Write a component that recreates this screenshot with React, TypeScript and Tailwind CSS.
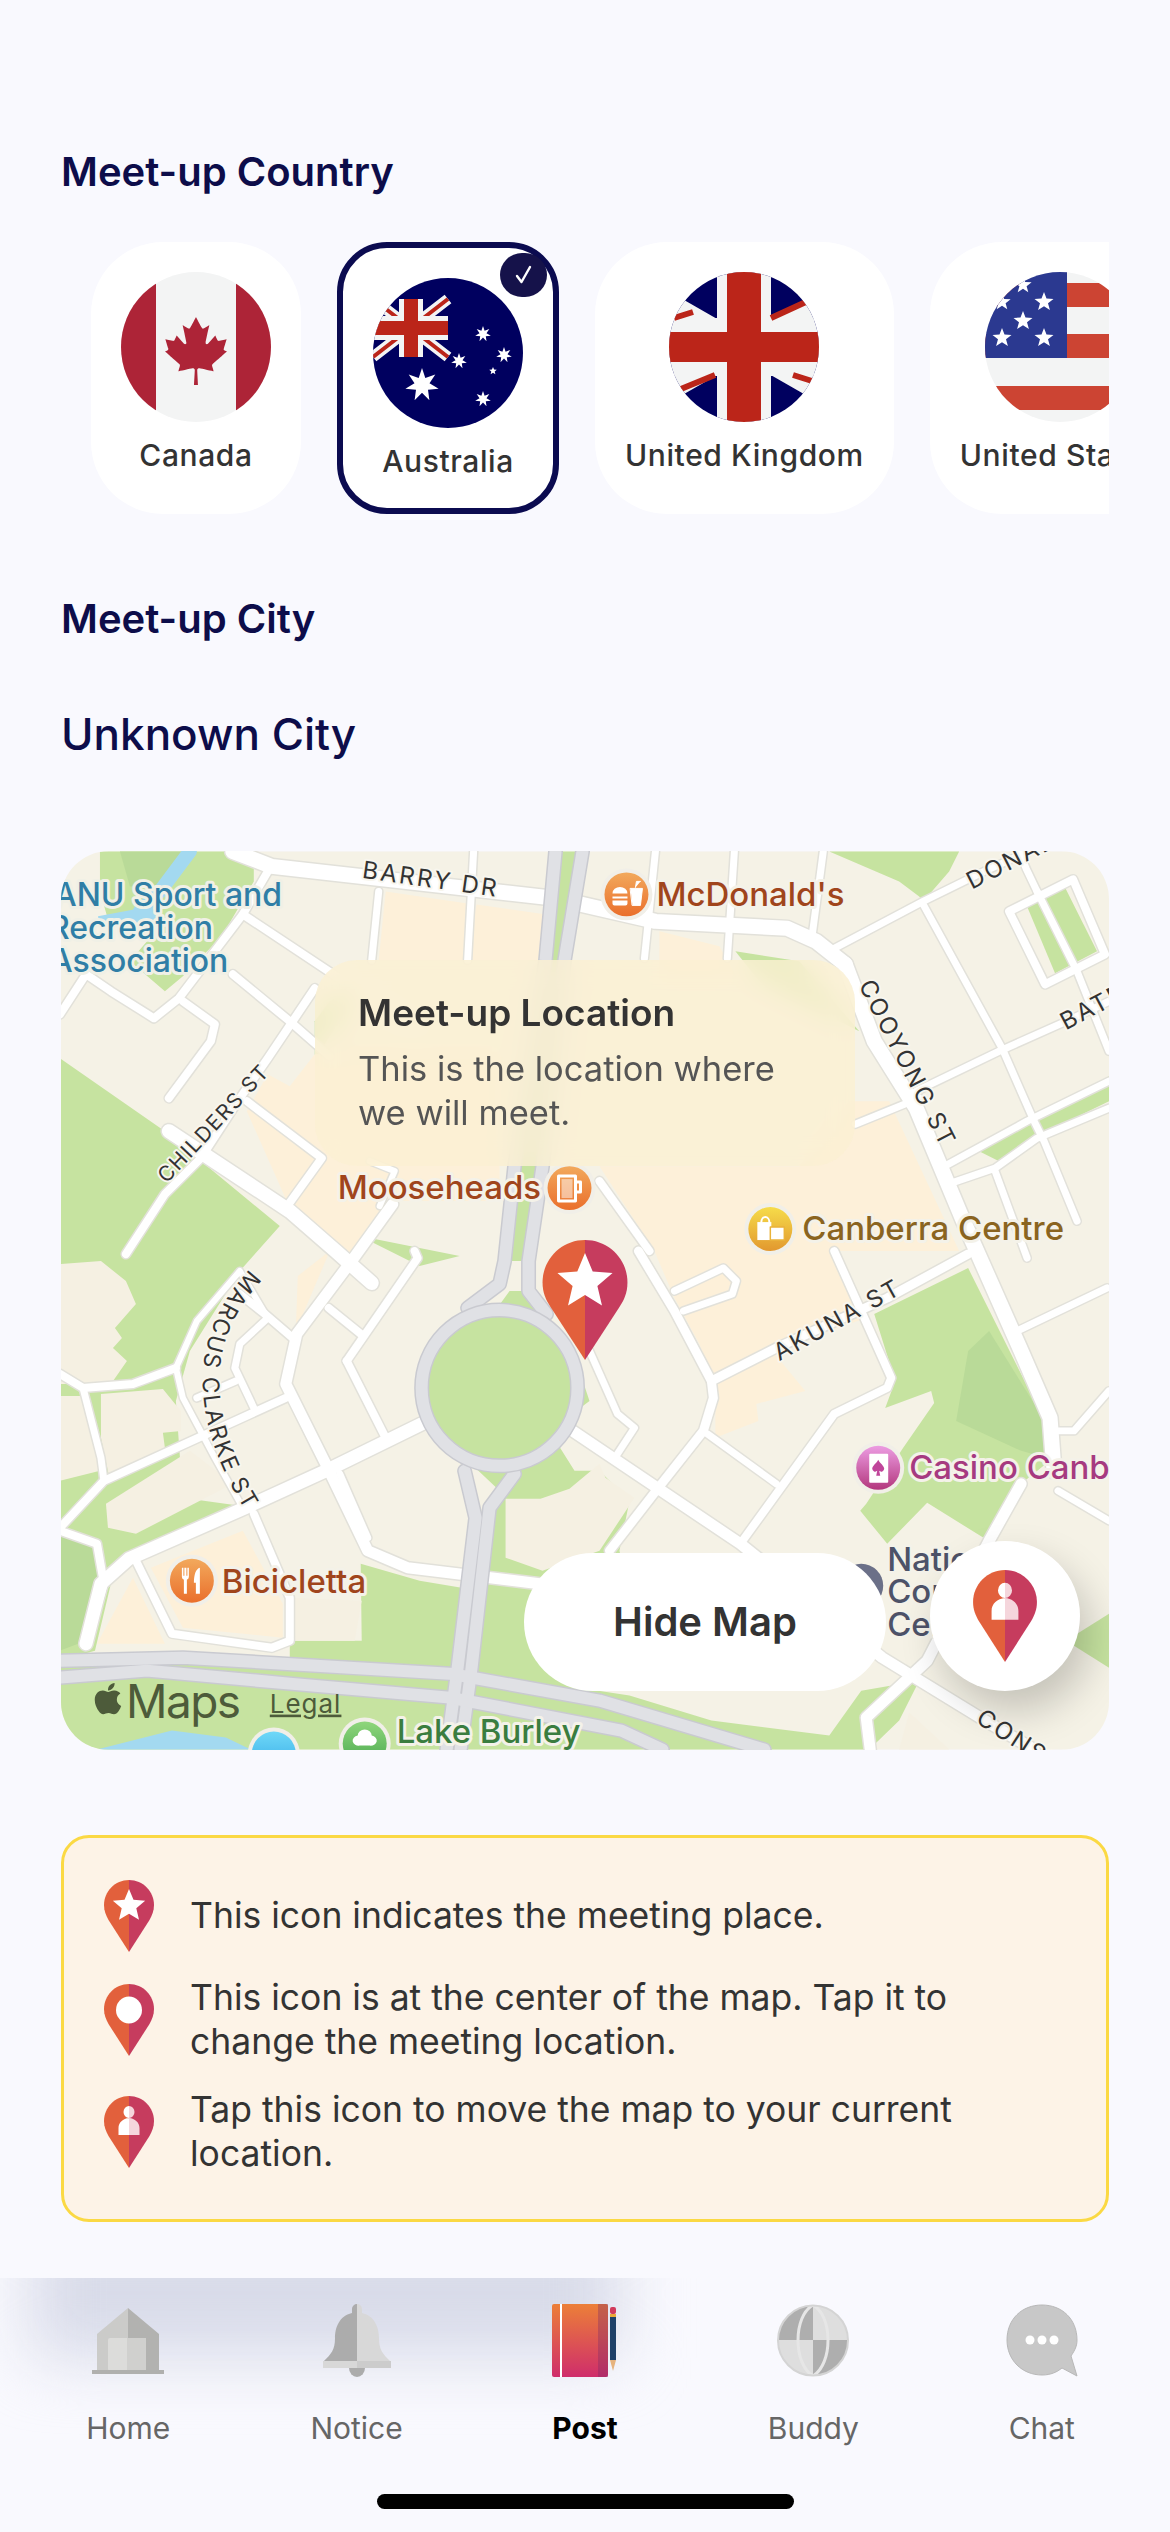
import { FaApple, FaCanadianMapleLeaf } from 'react-icons/fa';

const starPoints = (cx: number, cy: number, R: number, n = 5, ratio = 0.42) => {
  const pts: string[] = [];
  for (let i = 0; i < n * 2; i++) {
    const r = i % 2 === 0 ? R : R * ratio;
    const a = -Math.PI / 2 + (i * Math.PI) / n;
    pts.push(`${(cx + r * Math.cos(a)).toFixed(1)},${(cy + r * Math.sin(a)).toFixed(1)}`);
  }
  return pts.join(' ');
};

function Pin({ kind, className }: { kind: 'star' | 'dot' | 'person'; className: string }) {
  return (
    <svg viewBox="0 0 100 144" className={className}>
      <path d="M50 0C22 0 0 23 0 50C0 62 4 71 9 80L50 144Z" fill="#e2603c" />
      <path d="M50 0C78 0 100 23 100 50C100 62 96 71 91 80L50 144Z" fill="#c63c5e" />
      {kind === 'star' && <polygon points={starPoints(50, 52, 34, 5, 0.45)} fill="#fff" />}
      {kind === 'dot' && <ellipse cx="50" cy="52" rx="26" ry="27" fill="#fff" />}
      {kind === 'person' && (
        <>
          <path d="M50 20a11 12 0 0 0 0 24C38 45 29 53 29 64V78H50Z" fill="#fff" />
          <path d="M50 20a11 12 0 0 1 0 24C62 45 71 53 71 64V78H50Z" fill="#f5d6dc" />
        </>
      )}
    </svg>
  );
}

function FlagCanada() {
  return (
    <svg viewBox="0 0 150 150" className="w-[150px] h-[150px] block">
      <clipPath id="ca"><circle cx="75" cy="75" r="75" /></clipPath>
      <g clipPath="url(#ca)">
        <rect width="150" height="150" fill="#f3f4f4" />
        <rect width="35" height="150" fill="#ad2437" />
        <rect x="115" width="35" height="150" fill="#ad2437" />
        <FaCanadianMapleLeaf x="41" y="45" size={68} color="#ad2437" />
      </g>
    </svg>
  );
}

function FlagAustralia() {
  return (
    <svg viewBox="0 0 150 150" className="w-[150px] h-[150px] block">
      <clipPath id="au"><circle cx="75" cy="75" r="75" /></clipPath>
      <g clipPath="url(#au)">
        <rect width="150" height="150" fill="#00005f" />
        <path d="M0 21L75 79M75 21L0 79" stroke="#f3f4f4" strokeWidth="11" />
        <path d="M0 21L75 79M75 21L0 79" stroke="#bb2519" strokeWidth="4" />
        <rect x="26" y="21" width="24" height="58" fill="#f3f4f4" />
        <rect y="38" width="75" height="24" fill="#f3f4f4" />
        <rect x="31" y="21" width="14" height="58" fill="#bb2519" />
        <rect y="43" width="75" height="14" fill="#bb2519" />
        <polygon points={starPoints(49, 107, 17, 7, 0.45)} fill="#fff" />
        <polygon points={starPoints(110, 56, 8, 7, 0.45)} fill="#fff" />
        <polygon points={starPoints(131, 77, 8, 7, 0.45)} fill="#fff" />
        <polygon points={starPoints(86, 83, 8, 7, 0.45)} fill="#fff" />
        <polygon points={starPoints(120, 93, 4, 5, 0.45)} fill="#fff" />
        <polygon points={starPoints(110, 121, 8, 7, 0.45)} fill="#fff" />
      </g>
    </svg>
  );
}

function FlagUK() {
  return (
    <svg viewBox="0 0 150 150" className="w-[150px] h-[150px] block">
      <clipPath id="uk"><circle cx="75" cy="75" r="75" /></clipPath>
      <g clipPath="url(#uk)">
        <rect width="150" height="150" fill="#00005f" />
        <path d="M0 32L75 75M150 32L75 75M0 118L75 75M150 118L75 75" stroke="#f3f4f4" strokeWidth="22" />
        <rect x="48" width="54" height="150" fill="#f3f4f4" />
        <rect y="46" width="150" height="58" fill="#f3f4f4" />
        <path d="M102 46L139 29M7 119L46 103M5 46L24 40M124 103L143 109" stroke="#bb2519" strokeWidth="6" />
        <rect x="58" width="34" height="150" fill="#bb2519" />
        <rect y="60" width="150" height="30" fill="#bb2519" />
      </g>
    </svg>
  );
}

function FlagUS() {
  return (
    <svg viewBox="0 0 150 150" className="w-[150px] h-[150px] block">
      <clipPath id="us"><circle cx="75" cy="75" r="75" /></clipPath>
      <g clipPath="url(#us)">
        <rect width="150" height="150" fill="#f3f4f4" />
        <rect y="11" width="150" height="24" fill="#cc4433" />
        <rect y="62" width="150" height="24" fill="#cc4433" />
        <rect y="114" width="150" height="24" fill="#cc4433" />
        <rect width="82" height="86" fill="#2b3990" />
        <polygon points={starPoints(38, 13, 9)} fill="#fff" />
        <polygon points={starPoints(59, 30, 10)} fill="#fff" />
        <polygon points={starPoints(17, 30, 9)} fill="#fff" />
        <polygon points={starPoints(38, 49, 10)} fill="#fff" />
        <polygon points={starPoints(17, 66, 10)} fill="#fff" />
        <polygon points={starPoints(59, 66, 10)} fill="#fff" />
      </g>
    </svg>
  );
}

const countries = [
  { name: 'Canada', Flag: FlagCanada },
  { name: 'Australia', Flag: FlagAustralia, selected: true },
  { name: 'United Kingdom', Flag: FlagUK },
  { name: 'United States', Flag: FlagUS },
];

function CountryCard({ name, Flag, selected }: { name: string; Flag: () => React.ReactNode; selected?: boolean }) {
  return (
    <div
      className={
        selected
          ? 'relative flex-none h-[272px] px-[30px] pt-[30px] bg-white rounded-[50px] border-[6px] border-[#0b0b50] flex flex-col items-center'
          : 'relative flex-none h-[272px] px-[30px] pt-[30px] bg-white rounded-[72px] flex flex-col items-center'
      }
    >
      {selected && (
        <div className="absolute top-[5px] right-[6px] w-[47px] h-[44px] rounded-full bg-[#15124a] flex items-center justify-center">
          <svg viewBox="0 0 24 24" className="w-[24px] h-[24px]" fill="none" stroke="#fff" strokeWidth="2.4" strokeLinecap="round" strokeLinejoin="round">
            <path d="M5 13l4.5 6L18 4" />
          </svg>
        </div>
      )}
      <Flag />
      <div className="mt-[14px] text-[30px] leading-[38px] font-medium tracking-[0.6px] text-[#333] whitespace-nowrap">{name}</div>
    </div>
  );
}

// map data, page coordinates (viewBox matches the card's place on screen)
const greens = [
  '100,850 254,850 254,880 222,935 183,975 165,990 130,960 160,925 110,925 100,890',
  '60,1057 165,1130 280,1225 240,1270 190,1350 176,1400 181,1470 120,1545 95,1650 60,1660',
  '60,1480 240,1505 129,1555 100,1585 60,1590',
  '361,1563 362,1640 290,1640 290,1665 600,1690 640,1640 620,1550 630,1500 600,1470 575,1470 550,1430 590,1400 585,1385 530,1290 510,1290 430,1400 426,1420 500,1490 480,1590 420,1580',
  '60,1660 300,1665 500,1675 630,1695 712,1720 830,1735 862,1690 920,1680 900,1720 870,1749 60,1749',
  '969,1267 875,1313 896,1380 886,1407 932,1390 935,1402 904,1447 867,1503 861,1510 888,1543 928,1502 986,1538 1022,1483 1047,1463 1044,1417',
  '830,850 960,850 950,870 924,900 920,895 900,880',
  '1020,1125 1110,1075 1110,1100 1038,1135 1000,1160 980,1150',
  '1067,1640 1110,1613 1110,1667',
  '315,1020 330,1000 360,985 315,1060',
  '736,950 800,960 860,1030 840,1020 760,980',
  '360,1235 460,1255 420,1265',
];
const darkGreens = [
  '969,1350 990,1330 1044,1417 1047,1457 1022,1450 957,1420',
  '60,1530 97,1545 104,1583 86,1640 60,1650',
  '120,850 190,850 170,885 130,885',
];
const lands = [
  '60,1263 101,1260 126,1280 136,1303 115,1327 122,1337 113,1347 127,1360 111,1383 60,1383',
  '101,1393 163,1388 181,1410 181,1430 163,1432 165,1447 126,1467 110,1480 101,1437',
  '233,1483 136,1533 108,1527 106,1503 190,1450',
  '506,1498 541,1498 570,1488 600,1463 606,1477 635,1497 600,1550 543,1570 506,1557',
  '290,1597 362,1600 355,1640 295,1640',
  '60,1395 83,1395 100,1470 60,1480',
  '900,1749 950,1749 910,1712',
];
const peach = [
  '386,890 468,902 465,959 379,959',
  '477,903 545,913 540,959 465,959',
  '268,1073 290,1085 315,1053 500,1053 500,1200 395,1200 355,1255 336,1260 290,1207 247,1110',
  '655,1250 835,1250 867,1317 782,1347 712,1373 700,1343 675,1297',
  '716,1383 773,1350 806,1390 757,1403 759,1420 716,1437',
  '600,1165 800,1165 850,1100 890,1100 960,1250 655,1250',
  '660,930 720,945 740,980 660,980',
  '151,1567 243,1530 283,1603 283,1637 183,1627',
  '97,1643 133,1577 165,1643',
  '298,1275 330,1250 296,1330',
];
const roads: [string, number][] = [
  ['233,850 272,865 556,897 656,920 788,927 817,940 846,963', 15],
  ['846,963 875,1040 917,1107 963,1217 1022,1350 1051,1417 1055,1470', 15],
  ['268,870 243,913 179,997 154,1017 111,990 86,973 60,1013', 8],
  ['243,913 326,968 420,1030', 8],
  ['233,973 290,1020 330,1055', 8],
  ['183,1000 215,1023 211,1040 169,1097', 8],
  ['315,987 268,1057 240,1097 201,1157 165,1193 126,1253', 8],
  ['169,1130 290,1210 336,1250 372,1282', 14],
  ['247,1100 322,1157 286,1207', 8],
  ['393,1203 354,1257 297,1333 286,1383 326,1463 368,1550 408,1567 540,1583', 11],
  ['379,890 372,959', 7],
  ['474,850 468,959', 7],
  ['656,850 645,957', 7],
  ['735,850 728,957', 7],
  ['824,850 813,933', 7],
  ['380,1205 395,1170 370,1160', 6],
  ['422,1423 326,1470 243,1508 129,1558 101,1583 86,1643', 13],
  ['60,1373 83,1387 133,1383 176,1367', 8],
  ['83,1387 101,1457 104,1480', 7],
  ['60,1527 104,1480 286,1397', 8],
  ['243,1507 215,1457 183,1397 176,1367 197,1320 240,1270 268,1317', 6],
  ['268,1317 240,1343 235,1367 254,1407', 7],
  ['197,1397 236,1380', 7],
  ['240,1293 265,1313 293,1337', 8],
  ['347,1360 418,1257 415,1250', 8],
  ['347,1360 386,1437', 8],
  ['329,1307 361,1333', 8],
  ['340,1473 368,1537', 7],
  ['60,1530 97,1543 104,1583 86,1643', 8],
  ['136,1560 172,1633 272,1647 290,1640 290,1597 254,1513', 8],
  ['835,947 924,900 985,870 1030,850', 7],
  ['924,903 1003,1047 1035,1120 1045,1140 1078,1220', 7],
  ['1010,910 1074,878 1106,953 1046,983 1010,910', 8],
  ['1038,890 1078,970 1110,1050', 7],
  ['1038,890 1027,867 1020,850', 7],
  ['917,1090 1000,1050 1074,1017 1110,1000', 7],
  ['856,1123 920,1097', 7],
  ['942,1167 1028,1120 1110,1080', 7],
  ['949,1183 996,1167 1038,1137 1110,1107', 7],
  ['996,1170 1028,1257', 7],
  ['969,1253 888,1297 777,1347 712,1380', 9],
  ['639,1250 675,1310 712,1380 714,1397 704,1430 659,1487 610,1550', 9],
  ['675,1290 724,1267 737,1280 733,1293 684,1310', 7],
  ['835,1250 892,1377 888,1387 835,1413 741,1543', 8],
  ['590,1350 618,1413 635,1427 618,1453', 7],
  ['573,1430 741,1543 883,1657 981,1717 1035,1749', 11],
  ['708,1433 777,1483', 7],
  ['1018,1330 1108,1287', 7],
  ['1051,1430 1075,1430 1110,1390', 7],
  ['1059,1490 1110,1520', 7],
  ['1022,1483 990,1540 928,1660 867,1717 871,1749', 11],
  ['600,1180 650,1250', 8],
];
const highways = [
  'M556 850L546 959L515 1165L505 1260L500 1283L468 1307',
  'M583 850L565 959L543 1165L529 1260L529 1290L547 1313',
  'M465 1470L476 1517L458 1667L447 1749',
  'M515 1473L490 1507L472 1667L461 1749',
  'M60 1660L183 1657L450 1673L600 1700L765 1749',
  'M60 1677L147 1670L290 1683L450 1697L622 1730L663 1749',
];

function RoadLabel({ x, y, rot, small, children }: { x: number; y: number; rot: number; small?: boolean; children: string }) {
  return (
    <text
      x={x}
      y={y}
      textAnchor="middle"
      transform={`rotate(${rot} ${x} ${y})`}
      className={
        small
          ? 'text-[21px] tracking-[1.500px] fill-[#333] stroke-[#f8f6ee] stroke-[4px] [paint-order:stroke]'
          : 'text-[24px] tracking-[2.400px] fill-[#333] stroke-[#f8f6ee] stroke-[4px] [paint-order:stroke]'
      }
    >
      {children}
    </text>
  );
}

function PoiText({ x, y, className, children }: { x: number; y: number; className: string; children: string }) {
  return (
    <text x={x} y={y} className={`text-[33px] font-medium stroke-[#f4f2e9] stroke-[6px] [paint-order:stroke] ${className}`}>
      {children}
    </text>
  );
}

function PoiDot({ x, y, fill, children }: { x: number; y: number; fill: string; children?: React.ReactNode }) {
  return (
    <g transform={`translate(${x} ${y})`}>
      <circle r="26" fill="#f1efe8" />
      <circle r="22" fill={fill} />
      {children}
    </g>
  );
}

function MapBase() {
  return (
    <svg viewBox="61 850 1049 899" className="w-full h-full block [stroke-linejoin:round] [stroke-linecap:round]">
      <defs>
        <linearGradient id="poiOrange" x1="0" y1="0" x2="0" y2="1"><stop offset="0" stopColor="#f2a95c" /><stop offset="1" stopColor="#ea6f2c" /></linearGradient>
        <linearGradient id="poiYellow" x1="0" y1="0" x2="0" y2="1"><stop offset="0" stopColor="#f6dc4a" /><stop offset="1" stopColor="#e2982f" /></linearGradient>
        <linearGradient id="poiPink" x1="0" y1="0" x2="0" y2="1"><stop offset="0" stopColor="#ec9ce2" /><stop offset="1" stopColor="#b3377d" /></linearGradient>
        <linearGradient id="poiGreen" x1="0" y1="0" x2="0" y2="1"><stop offset="0" stopColor="#8fd67c" /><stop offset="1" stopColor="#4aa94e" /></linearGradient>
        <linearGradient id="poiBlue" x1="0" y1="0" x2="0" y2="1"><stop offset="0" stopColor="#6fd8f8" /><stop offset="1" stopColor="#2fa6e4" /></linearGradient>
      </defs>
      <rect x="61" y="850" width="1049" height="899" fill="#f5f2e6" />
      {greens.map((p) => <polygon key={p} points={p} fill="#c6e3a0" />)}
      {darkGreens.map((p) => <polygon key={p} points={p} fill="#b9da98" />)}
      {lands.map((p) => <polygon key={p} points={p} fill="#f5f0e2" />)}
      {peach.map((p) => <polygon key={p} points={p} fill="#fdf0d9" />)}
      <polygon points="1028,905 1066,886 1098,950 1056,972" fill="#c6e3a0" />
      <polygon points="97,1749 172,1730 226,1737 251,1749" fill="#a3d9f0" />
      <path d="M190 850L160 890L140 910" stroke="#a3d9f0" strokeWidth="14" fill="none" />
      <polygon points="98,915 150,905 175,925 100,925" fill="#a3d9f0" />

      {roads.map(([p, w]) => <polyline key={p} points={p} fill="none" stroke="#e2e1da" strokeWidth={w + 3} />)}
      {roads.map(([p, w]) => <polyline key={p} points={p} fill="none" stroke="#fff" strokeWidth={w} />)}

      <polygon points="556,850 583,850 565,959 543,1165 529,1260 505,1260 515,1165 546,959" fill="#c6e3a0" />
      <polygon points="476,1517 490,1507 472,1667 458,1667" fill="#c6e3a0" />
      {highways.map((d) => <path key={d} d={d} fill="none" stroke="#c9cad0" strokeWidth="15" />)}
      {highways.map((d) => <path key={d} d={d} fill="none" stroke="#e0e1e5" strokeWidth="12" />)}
      <circle cx="500" cy="1387" r="78" fill="#c6e3a0" stroke="#c9cad0" strokeWidth="15" />
      <circle cx="500" cy="1387" r="78" fill="none" stroke="#e0e1e5" strokeWidth="12" />

      <RoadLabel x={430} y={886} rot={8}>BARRY DR</RoadLabel>
      <RoadLabel x={219} y={1127} rot={-47} small>CHILDERS ST</RoadLabel>
      <RoadLabel x={901} y={1066} rot={63}>COOYONG ST</RoadLabel>
      <RoadLabel x={842} y={1326} rot={-29}>AKUNA ST</RoadLabel>
      <RoadLabel x={1024} y={862} rot={-27}>DONALD</RoadLabel>
      <RoadLabel x={1118} y={1002} rot={-28}>BATMAN</RoadLabel>
      <RoadLabel x={1020} y={1750} rot={33}>CONSTI</RoadLabel>
      <path id="marcus" d="M250 1268Q150 1375 262 1535" fill="none" />
      <text className="text-[23px] tracking-[2px] fill-[#333] stroke-[#f8f6ee] stroke-[4px] [paint-order:stroke]">
        <textPath href="#marcus">MARCUS CLARKE ST</textPath>
      </text>

      <g className="font-medium fill-[#2f7ea6] stroke-[#f0f0e6] stroke-[6px] [paint-order:stroke] text-[32px]">
        <text x="54" y="905">ANU Sport and</text>
        <text x="49" y="938">Recreation</text>
        <text x="50" y="971">Association</text>
      </g>

      <PoiDot x={627} y={893} fill="url(#poiOrange)">
        <path d="M-14 -1a7 6 0 0 1 15 0zM-14 2h15v2h-15zM-14 6h15v3a2 2 0 0 1-2 2h-11a2 2 0 0 1-2-2z" fill="#fff" />
        <path d="M4 -6h12l-2 17h-8zM9 -7l1-6h4" fill="#fff" stroke="#fff" strokeWidth="1" />
      </PoiDot>
      <PoiText x={657} y={905} className="fill-[#a0451c]">McDonald's</PoiText>

      <PoiText x={338} y={1198} className="fill-[#a0451c]">Mooseheads</PoiText>
      <PoiDot x={570} y={1187} fill="url(#poiOrange)">
        <path d="M-11 -12h17v25h-17zM6 -6h5v10h-5" fill="none" stroke="#fff" strokeWidth="3" />
        <rect x="-8" y="-9" width="11" height="19" fill="#fff" opacity=".5" />
      </PoiDot>

      <PoiDot x={771} y={1228} fill="url(#poiYellow)">
        <path d="M-13 -7h14v18h-14z" fill="#fff" />
        <path d="M-9 -7a4 5 0 0 1 8 0" fill="none" stroke="#fff" strokeWidth="2" />
        <path d="M0 -2h14v13h-14z" fill="#fff" stroke="#eab33a" strokeWidth="1.5" />
      </PoiDot>
      <PoiText x={803} y={1239} className="fill-[#8a6420]">Canberra Centre</PoiText>

      <PoiDot x={192} y={1580} fill="url(#poiOrange)">
        <path d="M-10 -13v9a3 3 0 0 0 2 3v14h3v-14a3 3 0 0 0 2-3v-9h-1.500v8h-1v-8h-2v8h-1v-8z" fill="#fff" />
        <path d="M4 13v-11h-2c0-8 2-14 6-15v26z" fill="#fff" />
      </PoiDot>
      <PoiText x={222} y={1592} className="fill-[#a0451c]">Bicicletta</PoiText>

      <PoiDot x={879} y={1467} fill="url(#poiPink)">
        <rect x="-9" y="-14" width="19" height="29" rx="1" fill="#fff" />
        <path d="M0 -8c2 4 6 6 6 9a3 3 0 0 1-5 2l1 5h-4l1-5a3 3 0 0 1-5-2c0-3 4-5 6-9z" fill="#c0459a" />
      </PoiDot>
      <PoiText x={910} y={1478} className="fill-[#a63a80]">Casino Canberra</PoiText>

      <circle cx="862" cy="1585" r="22" fill="#6b7088" />
      <g className="text-[33px] font-medium fill-[#4d5268] stroke-[#f4f2e9] stroke-[6px] [paint-order:stroke]">
        <text x="888" y="1570">National</text>
        <text x="888" y="1602">Convention</text>
        <text x="888" y="1635">Centre</text>
      </g>

      <PoiDot x={365} y={1743} fill="url(#poiGreen)">
        <path d="M0 -14a7 6 0 0 1 7 6a6 5 0 0 1-2 10h-10a6 5 0 0 1-2-10a7 6 0 0 1 7-6z" fill="#fff" />
      </PoiDot>
      <PoiText x={397} y={1742} className="fill-[#3a7d3f]">Lake Burley</PoiText>
      <PoiDot x={274} y={1753} fill="url(#poiBlue)" />

      <FaApple x={90} y={1680} size={36} color="#4d5b3a" />
      <text x="126" y="1717" className="text-[46px] tracking-[-1.500px] fill-[#4d5b3a]">Maps</text>
      <text x="270" y="1712" className="text-[26px] tracking-[1px] fill-[#4d5b3a] underline">Legal</text>

      <g transform="translate(543 1239)">
        <path d="M42.500 0C19 0 0 19 0 42.500C0 53 3.500 60 8 67L42.500 120Z" fill="#e2603c" />
        <path d="M42.500 0C66 0 85 19 85 42.500C85 53 81.500 60 77 67L42.500 120Z" fill="#c63c5e" />
        <polygon points={starPoints(42.5, 42, 29, 5, 0.45)} fill="#fff" />
      </g>
    </svg>
  );
}

function HomeIcon() {
  return (
    <svg viewBox="0 0 72 66" className="w-[72px] h-[66px]">
      <path d="M36 0L5 26V63H36Z" fill="#cbcbc9" />
      <path d="M36 0L67 26V63H36Z" fill="#b2b2b0" />
      <rect x="16" y="30" width="38" height="33" rx="2" fill="#dcdcda" />
      <rect x="35" y="30" width="19" height="33" fill="#d0d0ce" />
      <rect y="62" width="72" height="4" fill="#b0b0ae" />
    </svg>
  );
}

function BellIcon() {
  return (
    <svg viewBox="0 0 68 73" className="w-[68px] h-[73px]">
      <path d="M34 0a5 5 0 0 0-5 5V9C16 12 12 24 12 34C12 46 8 50 1 57V64H34Z" fill="#acacac" />
      <path d="M34 0a5 5 0 0 1 5 5V9C52 12 56 24 56 34C56 46 60 50 67 57V64H34Z" fill="#d8d8d8" />
      <rect y="57" width="34" height="7" fill="#d8d8d8" />
      <rect x="34" y="57" width="34" height="7" fill="#cccccc" />
      <path d="M26 64h16a8 9 0 0 1-16 0z" fill="#acacac" />
    </svg>
  );
}

function PostIcon() {
  return (
    <svg viewBox="0 0 66 73" className="w-[66px] h-[73px]">
      <defs>
        <linearGradient id="bookGrad" x1="0" y1="0" x2="0" y2="1">
          <stop offset="0" stopColor="#ec7f38" />
          <stop offset="1" stopColor="#cf2d6b" />
        </linearGradient>
      </defs>
      <rect width="56" height="73" rx="2" fill="url(#bookGrad)" />
      <rect x="8" width="2" height="73" fill="#fff" />
      <rect x="46" width="10" height="73" fill="#7a2b66" opacity=".35" />
      <rect x="58" y="3" width="6" height="7" rx="2" fill="#d13a5c" />
      <rect x="58" y="10" width="6" height="3" fill="#eaa93a" />
      <rect x="58" y="13" width="6" height="43" fill="#1f4168" />
      <path d="M58 56h6l-3 11z" fill="#e6b37e" />
    </svg>
  );
}

function BuddyIcon() {
  return (
    <svg viewBox="0 0 72 73" className="w-[72px] h-[73px]">
      <clipPath id="globe"><circle cx="36" cy="36.500" r="35" /></clipPath>
      <g clipPath="url(#globe)">
        <rect width="36" height="36" fill="#aeaeae" />
        <rect x="36" width="36" height="36" fill="#dedede" />
        <rect y="36" width="36" height="37" fill="#dedede" />
        <rect x="36" y="36" width="36" height="37" fill="#aeaeae" />
        <path d="M36 1C16 12 16 60 36 72M36 1C56 12 56 60 36 72" fill="none" stroke="#e6e6e6" strokeWidth="3" />
      </g>
      <circle cx="36" cy="36.500" r="35" fill="none" stroke="#d4d4d4" strokeWidth="2" />
    </svg>
  );
}

function ChatIcon() {
  return (
    <svg viewBox="0 0 72 73" className="w-[72px] h-[73px]">
      <path d="M36 1C16 1 1 15 1 36C1 56 16 71 36 71C45 71 51 68 56 64L71 72L65 52C69 46 71 42 71 36C71 15 56 1 36 1Z" fill="#c8c8c8" stroke="#b8b8b8" strokeWidth="1" />
      <circle cx="24" cy="36" r="4.500" fill="#fff" />
      <circle cx="36" cy="36" r="4.500" fill="#fff" />
      <circle cx="48" cy="36" r="4.500" fill="#fff" />
    </svg>
  );
}

const tabs = [
  { label: 'Home', Icon: HomeIcon },
  { label: 'Notice', Icon: BellIcon },
  { label: 'Post', Icon: PostIcon, active: true },
  { label: 'Buddy', Icon: BuddyIcon },
  { label: 'Chat', Icon: ChatIcon },
];

export default function App() {
  return (
    <div className="w-[1170px] h-[2532px] overflow-hidden bg-[#f9f9fe] [font-family:Inter,sans-serif]">
      <div className="px-[61px] pt-[150px]">
        <h2 className="text-[40px] leading-[44px] font-semibold text-[#0d0d4a]">Meet-up Country</h2>

        <div className="mt-[48px] flex gap-[36px] pl-[30px] overflow-hidden">
          {countries.map((c) => (
            <CountryCard key={c.name} {...c} />
          ))}
        </div>

        <h2 className="mt-[83px] text-[40px] leading-[44px] font-semibold text-[#0d0d4a]">Meet-up City</h2>
        <div className="mt-[67px] text-[44px] leading-[52px] font-medium text-[#0d0d4a]">Unknown City</div>

        <div className="relative mt-[91px] h-[899px] rounded-[48px] overflow-hidden">
          <MapBase />

          <div className="absolute left-[254px] top-[109px] w-[540px] h-[206px] rounded-[42px] bg-[#fbf0d2]/80 backdrop-blur-md pl-[43px] pt-[31px]">
            <div className="text-[37px] leading-[44px] font-semibold text-[#333]">Meet-up Location</div>
            <div className="mt-[12px] text-[34.500px] leading-[44px] text-[#555]">
              This is the location where
              <br />
              we will meet.
            </div>
          </div>

          <div className="absolute left-[463px] top-[702px] w-[362px] h-[138px] rounded-full bg-white flex items-center justify-center text-[40px] font-semibold text-[#333]">
            Hide Map
          </div>

          <div className="absolute left-[869px] top-[690px] w-[150px] h-[150px] rounded-full bg-white flex items-center justify-center shadow-[10px_20px_40px_rgba(0,0,0,0.2)]">
            <Pin kind="person" className="w-[64px] h-[92px]" />
          </div>
        </div>

        <div className="mt-[85px] border-[3px] border-[#fbd944] rounded-[28px] bg-[#fdf3e7] pl-[40px] pr-[60px] pt-[42px] pb-[43px] flex flex-col gap-[24px] text-[35.500px] leading-[44px] text-[#333]">
          <div className="flex items-center gap-[36px]">
            <Pin kind="star" className="flex-none w-[50px] h-[72px]" />
            <p>This icon indicates the meeting place.</p>
          </div>
          <div className="flex items-center gap-[36px]">
            <Pin kind="dot" className="flex-none w-[50px] h-[72px]" />
            <p>This icon is at the center of the map. Tap it to change the meeting location.</p>
          </div>
          <div className="flex items-center gap-[36px]">
            <Pin kind="person" className="flex-none w-[50px] h-[72px]" />
            <p>Tap this icon to move the map to your current location.</p>
          </div>
        </div>
      </div>

      <div className="relative mt-[56px] h-[255px] overflow-hidden">
        <div className="absolute left-[30px] -top-[50px] w-[590px] h-[130px] bg-[#d8dbe9] blur-[32px]" />
        <div className="relative grid grid-cols-5 px-[14px] pt-[26px]">
          {tabs.map(({ label, Icon, active }) => (
            <div key={label} className="flex flex-col items-center">
              <div className="h-[73px] flex items-center">
                <Icon />
              </div>
              <div className={active ? 'mt-[34px] text-[30px] leading-[34px] font-bold text-black' : 'mt-[34px] text-[30px] leading-[34px] text-[#666]'}>
                {label}
              </div>
            </div>
          ))}
        </div>
        <div className="relative mt-[49px] mx-auto w-[417px] h-[15px] rounded-full bg-black" />
      </div>
    </div>
  );
}
